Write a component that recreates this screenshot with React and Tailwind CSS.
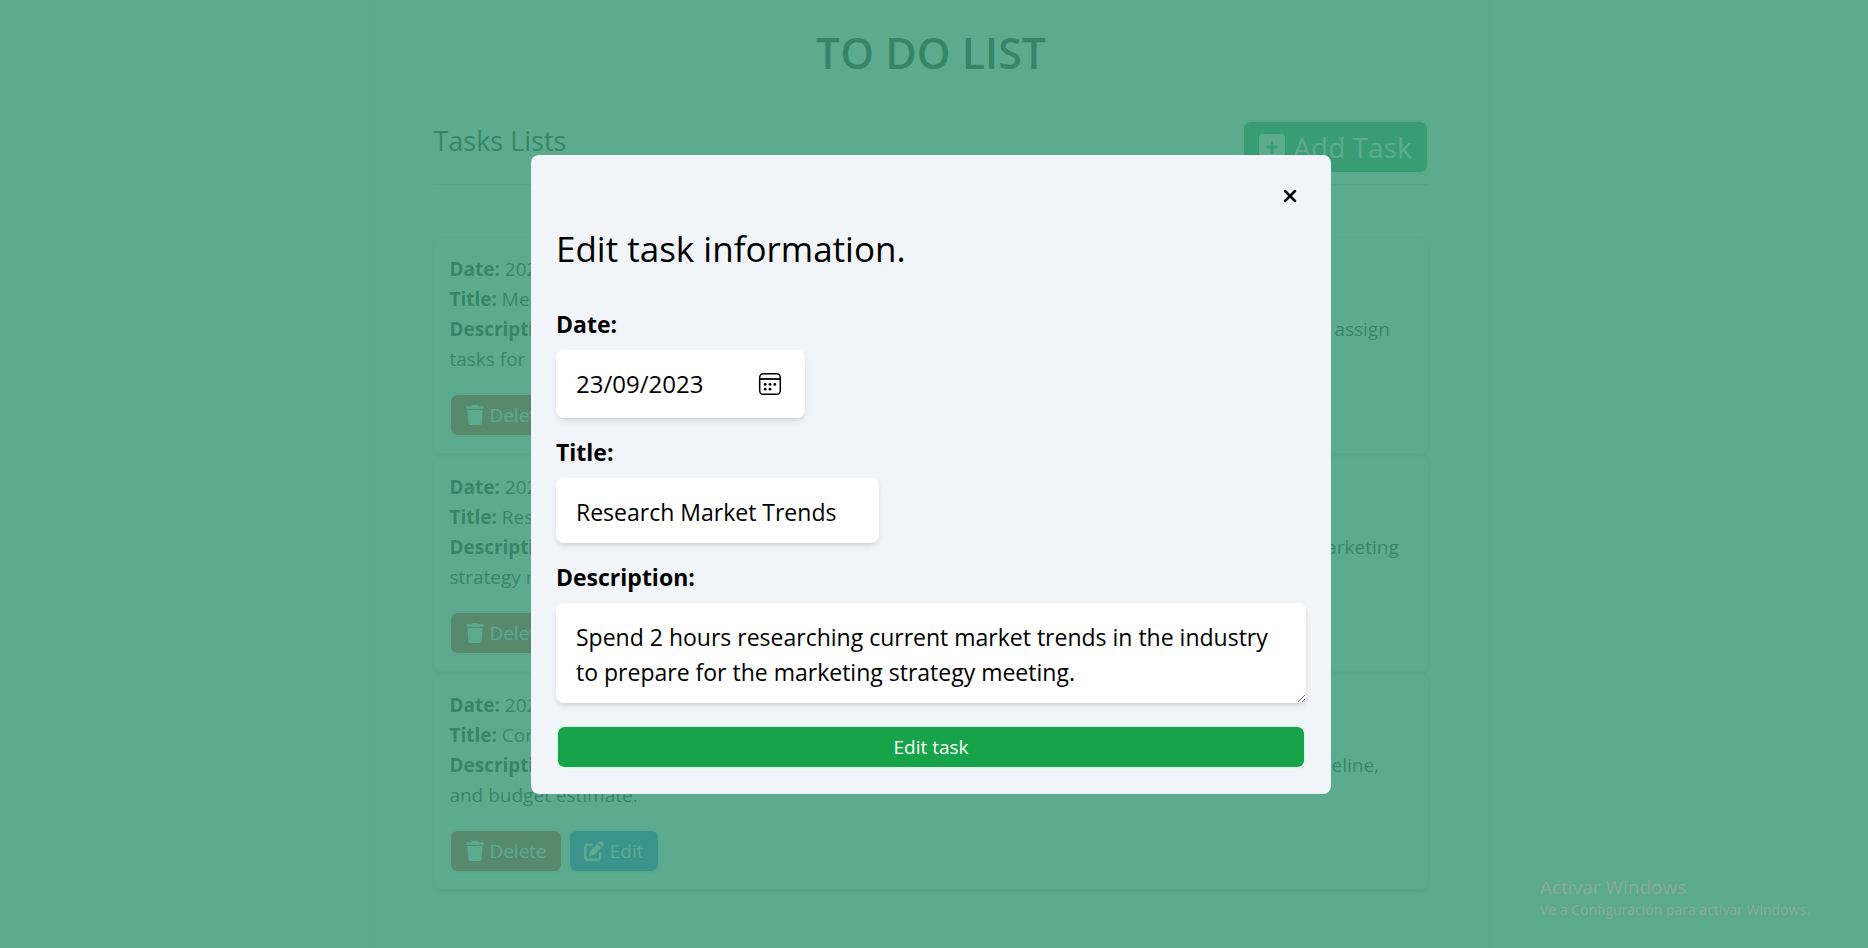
import { useState } from "react";
import { FaPenToSquare, FaSquarePlus, FaTrash } from "react-icons/fa6";
import { X } from "lucide-react";

const tasks = [
  {
    date: "2023-09-22",
    title: "Meeting with the project team",
    description:
      "Meet with the project team to review the current progress, discuss all open issues and assign tasks for the next week.",
  },
  {
    date: "2023-09-23",
    title: "Research Market Trends",
    description:
      "Spend 2 hours researching current market trends in the industry to prepare for the marketing strategy meeting.",
  },
  {
    date: "2023-09-25",
    title: "Complete Client Proposal",
    description:
      "Create the client proposal document, including the project scope, key deliverables, timeline, and budget estimate.",
  },
];

function CalendarIcon() {
  return (
    <svg width="24" height="24" viewBox="0 0 24 24" fill="none" stroke="currentColor" aria-hidden="true">
      <rect x="1.7" y="1.7" width="20.6" height="20.6" rx="3.6" strokeWidth="1.5" />
      <path d="M2 7h20" strokeWidth="1.8" />
      <g fill="currentColor" stroke="none">
        <circle cx="7.2" cy="12.4" r="1.4" />
        <circle cx="12" cy="12.4" r="1.4" />
        <circle cx="16.8" cy="12.4" r="1.4" />
        <circle cx="7.2" cy="17.2" r="1.4" />
        <circle cx="12" cy="17.2" r="1.4" />
      </g>
    </svg>
  );
}

function TaskCard({ task }) {
  return (
    <li className="rounded-lg border border-gray-200 px-[15px] py-4 text-[19px] leading-[30px] shadow-md">
      <p>
        <strong>Date:</strong> {task.date}
      </p>
      <p>
        <strong>Title:</strong> {task.title}
      </p>
      <p>
        <strong>Description:</strong> {task.description}
      </p>
      <div className="mt-[19px] flex gap-[5px]">
        <button type="button" className="flex h-11 items-center gap-1 rounded-lg border-2 border-red-100 bg-[#dc2626] bg-clip-padding px-[14px] text-white">
          <FaTrash className="size-5" />
          Delete
        </button>
        <button type="button" className="flex h-11 items-center gap-[6px] rounded-lg border-2 border-blue-100 bg-[#2563eb] bg-clip-padding px-[14px] text-white">
          <FaPenToSquare className="size-5" />
          Edit
        </button>
      </div>
    </li>
  );
}

function EditDialog() {
  const [date, setDate] = useState("23/09/2023");
  const [title, setTitle] = useState(tasks[1].title);
  const [description, setDescription] = useState(tasks[1].description);

  return (
    <div className="fixed inset-0 flex items-center justify-center bg-[#3f9c7a]/85 pr-[6px]">
      <div role="dialog" aria-modal="true" aria-labelledby="dialog-title" className="flex w-full max-w-[800px] flex-col rounded-lg bg-slate-100 p-[25px]">
        <button type="button" aria-label="Close" className="self-end p-[6px]">
          <X className="size-5" strokeWidth={3} />
        </button>
        <h2 id="dialog-title" className="mt-[14px] mb-9 text-[35px] leading-[45px]">
          Edit task information.
        </h2>
        <form className="flex flex-col text-[23px] leading-[35px]" onSubmit={(e) => e.preventDefault()}>
          <label htmlFor="date" className="mb-2 font-bold">Date:</label>
          <div className="mb-[17px] flex h-[68px] w-[249px] items-center rounded-lg bg-white pr-[23px] pl-5 shadow-md">
            <input id="date" type="text" value={date} onChange={(e) => setDate(e.target.value)} className="min-w-0 flex-1 text-[24px] outline-none" />
            <button type="button" aria-label="Choose date">
              <CalendarIcon />
            </button>
          </div>
          <label htmlFor="title" className="mb-2 font-bold">Title:</label>
          <input id="title" type="text" value={title} onChange={(e) => setTitle(e.target.value)} className="mb-[17px] h-[65px] w-[323px] rounded-lg bg-white px-5 pt-[3px] shadow-md outline-none" />
          <label htmlFor="description" className="mb-2 font-bold">Description:</label>
          <textarea id="description" rows={2} value={description} onChange={(e) => setDescription(e.target.value)} className="mb-[22px] h-[100px] rounded-lg bg-white px-5 pt-[17px] pb-3 shadow-md outline-none" />
          <button type="submit" className="h-11 rounded-lg border-2 border-green-100 bg-[#16a34a] bg-clip-padding text-[19px] leading-[30px] text-white">
            Edit task
          </button>
        </form>
      </div>
    </div>
  );
}

export default function App() {
  return (
    <div className="min-h-screen bg-white pr-[6px] font-['Open_Sans',sans-serif] text-black">
      <main className="mx-auto min-h-screen w-3/5 border-x border-gray-200 px-[60px] pt-[23px] pb-10 shadow-md">
        <h1 className="mb-[37px] text-center text-[43px] leading-[60px] font-semibold">TO DO LIST</h1>
        <div className="mb-[52px] flex items-start justify-between border-b border-gray-300 pb-[10px]">
          <h2 className="text-[27px] leading-[42px]">Tasks Lists</h2>
          <button type="button" className="flex h-[54px] items-center gap-2 rounded-lg border-2 border-green-100 bg-[#16a34a] bg-clip-padding px-[15px] text-[28px] text-white">
            <FaSquarePlus className="h-[30px] w-[26px]" />
            Add Task
          </button>
        </div>
        <ul className="flex flex-col gap-px">
          {tasks.map((task) => (
            <TaskCard key={task.date} task={task} />
          ))}
        </ul>
      </main>
      <EditDialog />
      <div className="fixed right-[58px] bottom-[28px] text-[#8ea99b]">
        <p className="text-[19px] leading-[26px]">Activar Windows</p>
        <p className="text-[14px] leading-5">Ve a Configuración para activar Windows.</p>
      </div>
    </div>
  );
}
